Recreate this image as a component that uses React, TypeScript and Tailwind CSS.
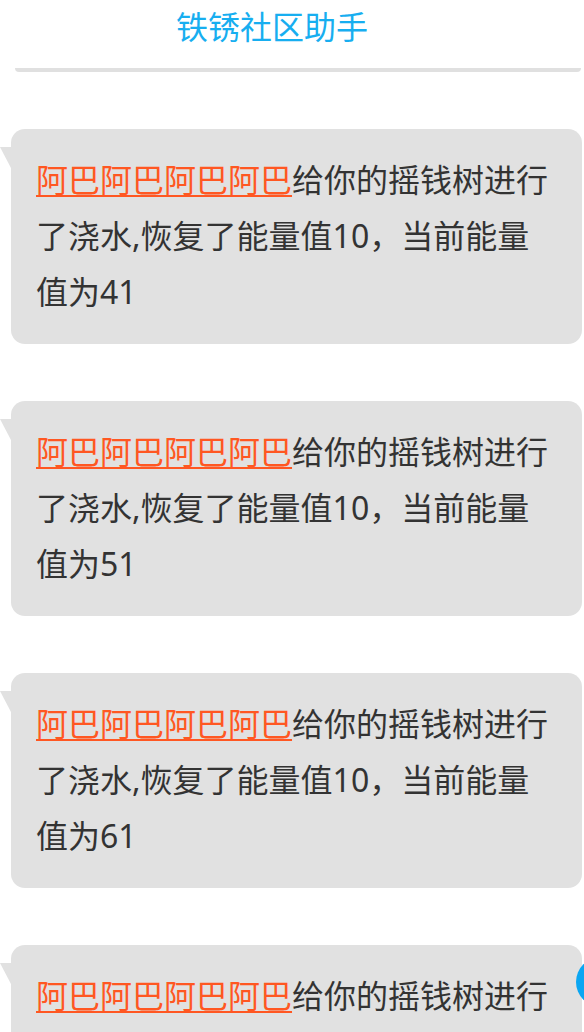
const MESSAGES = [
  { id: 1, user: '阿巴阿巴阿巴阿巴', value: 41 },
  { id: 2, user: '阿巴阿巴阿巴阿巴', value: 51 },
  { id: 3, user: '阿巴阿巴阿巴阿巴', value: 61 },
  { id: 4, user: '阿巴阿巴阿巴阿巴', value: 71 },
];

const Bubble = ({ user, value }: { user: string; value: number }) => (
  <div className="relative ml-[11px] mr-[2px] rounded-[14px] bg-[#e1e1e1] pl-[25px] pr-[25px] pt-[23px] pb-6">
    {/* little tail on the left */}
    <div className="absolute left-[-11px] top-[18px] h-[23px] w-[12px] bg-[#e1e1e1] [clip-path:polygon(0_0,100%_0,100%_100%)]" />
    <p className="text-[32px] leading-[56px] text-[#333333]">
      <a className="text-[#ff5722] underline decoration-[2px] underline-offset-[3px]">{user}</a>
      给你的摇钱树进行了浇水,恢复了能量值10，当前能量值为{value}
    </p>
  </div>
);

export default function App() {
  return (
    <div className="relative h-[1032px] w-[584px] overflow-hidden bg-white font-['Noto_Sans','Noto_Sans_CJK_SC',sans-serif]">
      <header>
        <div className="flex h-[54px] items-center justify-center pr-10">
          <h1 className="text-[32px] leading-[40px] text-[#17aef0]">铁锈社区助手</h1>
        </div>
        <div className="ml-[15px] mr-[3px] mt-[14px] h-[4px] rounded-b-full bg-[#e0e0e0]" />
      </header>

      <main className="flex flex-col gap-[57px] pt-[57px]">
        {MESSAGES.map((m) => (
          <Bubble key={m.id} user={m.user} value={m.value} />
        ))}
      </main>

      <button className="absolute left-[576px] top-[957px] h-[50px] w-[50px] rounded-full bg-[#0aa6f2]" />
    </div>
  );
}
